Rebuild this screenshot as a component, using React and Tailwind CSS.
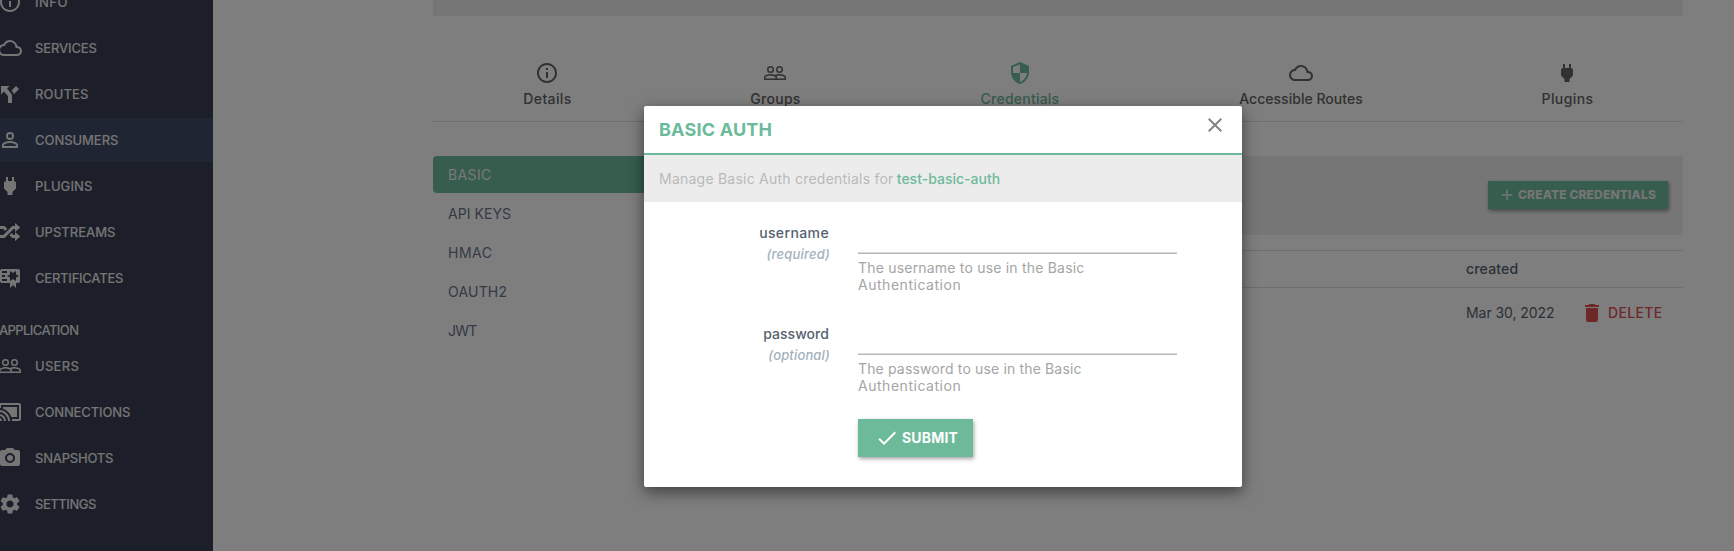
import React from "react";
import { MdInfoOutline, MdCloudQueue, MdSettings, MdDelete, MdClose, MdCheck, MdAdd } from "react-icons/md";

const PATHS = {
  fork: "M3,4V12.5L6,9.5L9,13C10,14 10,15 10,15V21H14V14C14,14 14,13 13.47,12C12.94,11 12,10 12,10L9,6.58L11.5,4M18,4L13.54,8.47L14,9C14,9 14.93,10 15.47,11C15.68,11.4 15.8,11.79 15.87,12.13L21,7",
  account: "M12,13C9.33,13 4,14.33 4,17V20H20V17C20,14.33 14.67,13 12,13M12,4A4,4 0 0,0 8,8A4,4 0 0,0 12,12A4,4 0 0,0 16,8A4,4 0 0,0 12,4M12,14.9C14.97,14.9 18.1,16.36 18.1,17V18.1H5.9V17C5.9,16.36 9,14.9 12,14.9M12,5.9A2.1,2.1 0 0,1 14.1,8A2.1,2.1 0 0,1 12,10.1A2.1,2.1 0 0,1 9.9,8A2.1,2.1 0 0,1 12,5.9Z",
  plug: "M16,7V3H14V7H10V3H8V7H8C7,7 6,8 6,9V14.5L9.5,18V21H14.5V18L18,14.5V9C18,8 17,7 16,7Z",
  shuffle: "M17,3L22.25,7.5L17,12L22.25,16.5L17,21V18H14.26L11.44,15.18L13.56,13.06L15.5,15H17V12L17,9H15.5L6.5,18H2V15H5.26L14.26,6H17V3M2,6H6.5L9.32,8.82L7.2,10.94L5.26,9H2V6Z",
  certificate: "M4,3C2.89,3 2,3.89 2,5V15A2,2 0 0,0 4,17H12V22L15,19L18,22V17H20A2,2 0 0,0 22,15V8L22,6V5A2,2 0 0,0 20,3H16V3H4M12,5L15,7L18,5V8.5L21,10L18,11.5V15L15,13L12,15V11.5L9,10L12,8.5V5M4,5H9V7H4V5M4,9H7V11H4V9M4,13H9V15H4V13Z",
  users: "M16.5,6.5A2,2 0 0,1 18.5,8.5A2,2 0 0,1 16.5,10.5A2,2 0 0,1 14.5,8.5A2,2 0 0,1 16.5,6.5M16.5,12A3.5,3.5 0 0,0 20,8.5A3.5,3.5 0 0,0 16.5,5A3.5,3.5 0 0,0 13,8.5A3.5,3.5 0 0,0 16.5,12M7.5,6.5A2,2 0 0,1 9.5,8.5A2,2 0 0,1 7.5,10.5A2,2 0 0,1 5.5,8.5A2,2 0 0,1 7.5,6.5M7.5,12A3.5,3.5 0 0,0 11,8.5A3.5,3.5 0 0,0 7.5,5A3.5,3.5 0 0,0 4,8.5A3.5,3.5 0 0,0 7.5,12M21.5,17.5H14V16.25C14,15.79 13.8,15.39 13.5,15.03C14.36,14.73 15.44,14.5 16.5,14.5C18.94,14.5 21.5,15.71 21.5,16.25M12.5,17.5H2.5V16.25C2.5,15.71 5.06,14.5 7.5,14.5C9.94,14.5 12.5,15.71 12.5,16.25M16.5,13C15.3,13 13.43,13.34 12,14C10.57,13.33 8.7,13 7.5,13C5.33,13 1,14.08 1,16.25V19H23V16.25C23,14.08 18.67,13 16.5,13Z",
  cast: "M21,3H3C1.89,3 1,3.89 1,5V8H3V5H21V19H14V21H21A2,2 0 0,0 23,19V5C23,3.89 22.1,3 21,3M1,10V12A9,9 0 0,1 10,21H12C12,14.92 7.07,10 1,10M19,7H5V8.63C8.96,9.91 12.09,13.04 13.37,17H19M1,14V16A5,5 0 0,1 6,21H8A7,7 0 0,0 1,14M1,18V21H4A3,3 0 0,0 1,18Z",
  camera: "M4,4H7L9,2H15L17,4H20A2,2 0 0,1 22,6V18A2,2 0 0,1 20,20H4A2,2 0 0,1 2,18V6A2,2 0 0,1 4,4M12,7A5,5 0 0,0 7,12A5,5 0 0,0 12,17A5,5 0 0,0 17,12A5,5 0 0,0 12,7M12,9A3,3 0 0,1 15,12A3,3 0 0,1 12,15A3,3 0 0,1 9,12A3,3 0 0,1 12,9Z",
  shield: "M12,12H19C18.47,16.11 15.72,19.78 12,20.92V12H5V6.3L12,3.19M12,1L3,5V11C3,16.55 6.84,21.73 12,23C17.16,21.73 21,16.55 21,11V5L12,1Z",
};

function Glyph({ name }) {
  return (
    <svg viewBox="0 0 24 24" className="size-6 shrink-0 fill-current">
      <path d={PATHS[name]} />
    </svg>
  );
}

function NavItem({ icon, label, tracking, active }) {
  return (
    <li className={`flex h-11 items-center ${active ? "bg-[#404a66]" : ""}`}>
      <span className="-ml-0.5 flex w-[37px] shrink-0">{icon}</span>
      <span className={`pt-px text-[13px] leading-none font-medium ${tracking}`}>{label}</span>
    </li>
  );
}

function Sidebar() {
  return (
    <nav className="h-full w-[213px] shrink-0 overflow-hidden bg-[#383f53] text-[#eaeaea]">
      <ul className="-mt-5 flex flex-col gap-0.5">
        <NavItem icon={<MdInfoOutline className="size-6" />} label="INFO" tracking="tracking-[0.45px]" />
        <NavItem icon={<MdCloudQueue className="size-6" />} label="SERVICES" tracking="tracking-[-0.15px]" />
        <NavItem icon={<Glyph name="fork" />} label="ROUTES" tracking="tracking-[0.13px]" />
        <NavItem icon={<Glyph name="account" />} label="CONSUMERS" tracking="tracking-[-0.06px]" active />
        <NavItem icon={<Glyph name="plug" />} label="PLUGINS" tracking="tracking-[0.1px]" />
        <NavItem icon={<Glyph name="shuffle" />} label="UPSTREAMS" tracking="tracking-[-0.02px]" />
        <NavItem icon={<Glyph name="certificate" />} label="CERTIFICATES" tracking="tracking-[-0.24px]" />
      </ul>
      <h2 className="-ml-px flex h-11 items-end pb-[7px] text-[13px] leading-none font-medium tracking-[-0.6px]">APPLICATION</h2>
      <ul className="flex flex-col gap-0.5">
        <NavItem icon={<Glyph name="users" />} label="USERS" tracking="tracking-[0.3px]" />
        <NavItem icon={<Glyph name="cast" />} label="CONNECTIONS" tracking="tracking-[-0.14px]" />
        <NavItem icon={<Glyph name="camera" />} label="SNAPSHOTS" tracking="tracking-[-0.24px]" />
        <NavItem icon={<MdSettings className="size-6" />} label="SETTINGS" tracking="tracking-[-0.47px]" />
      </ul>
    </nav>
  );
}

function Tab({ icon, label, className }) {
  return (
    <div className={`flex shrink-0 flex-col items-center gap-[7px] pt-[45px] text-sm leading-none font-medium ${className}`}>
      {icon}
      <span className="pl-px">{label}</span>
    </div>
  );
}

function TypeItem({ label, className }) {
  return <li className={`flex h-[37px] items-center rounded-sm pl-[15px] text-sm leading-none ${className}`}>{label}</li>;
}

function Page() {
  return (
    <main className="h-full grow overflow-hidden bg-[#fcfcfc] pr-[51px] pl-[220px]">
      <div className="h-4 bg-[#ededed]" />
      <div className="flex h-[106px] border-b border-[#dcdcdc] text-[#626262]">
        <Tab icon={<MdInfoOutline className="size-6" />} label="Details" className="w-[228px] tracking-[0.38px]" />
        <Tab icon={<Glyph name="users" />} label="Groups" className="w-[228px] tracking-[0.27px]" />
        <Tab icon={<Glyph name="shield" />} label="Credentials" className="w-[261px] tracking-[0.23px] text-[#6dba9b]" />
        <Tab icon={<MdCloudQueue className="size-6" />} label="Accessible Routes" className="w-[301px] tracking-[0.03px]" />
        <Tab icon={<Glyph name="plug" />} label="Plugins" className="w-[232px] tracking-[0.4px]" />
      </div>
      <div className="mt-[34px] flex gap-4">
        <ul className="flex w-[290px] shrink-0 flex-col gap-0.5 pt-px text-[#6a748c]">
          <TypeItem label="BASIC" className="-mt-px bg-[#6dba9b] pt-px tracking-[0.36px] text-[#f2f2f2]" />
          <TypeItem label="API KEYS" className="tracking-[0.05px]" />
          <TypeItem label="HMAC" className="tracking-[0.5px]" />
          <TypeItem label="OAUTH2" className="tracking-[0.2px]" />
          <TypeItem label="JWT" className="tracking-[-0.8px]" />
        </ul>
        <section className="grow text-sm leading-none text-[#55626d]">
          <div className="flex h-[79px] items-start justify-end bg-[#ededed] pt-[25px] pr-[15px]">
            <button className="flex h-7 w-[180px] items-center bg-[#6dba9b] pl-2.5 text-xs leading-none font-extrabold tracking-[0.15px] text-[#eaeaea] shadow-[1px_2px_4px_rgba(0,0,0,0.4)]">
              <MdAdd className="mr-[2px] size-[18px]" />
              CREATE CREDENTIALS
            </button>
          </div>
          <div className="mt-[15px] flex h-[38px] items-center border-y border-[#dcdcdc]">
            <span className="ml-auto w-[217px] font-medium tracking-[0.18px]">created</span>
          </div>
          <div className="flex h-[50px] items-center">
            <span className="ml-auto w-[114px] tracking-[-0.06px]">Mar 30, 2022</span>
            <span className="flex w-[103px] items-center gap-1 font-medium tracking-[0.35px] text-[#df5052]">
              <MdDelete className="size-6" />
              DELETE
            </span>
          </div>
        </section>
      </div>
    </main>
  );
}

function Field({ label, note, help, labelTracking, noteTracking, helpTracking }) {
  return (
    <div className="flex h-[101px]">
      <label className="flex w-[186px] shrink-0 flex-col items-end pt-[24px] text-sm leading-none font-medium text-[#55626d]">
        <span className={`pr-px ${labelTracking}`}>{label}</span>
        <em className={`mt-2 text-[13px] leading-none text-[#a3b1bd] ${noteTracking}`}>{note}</em>
      </label>
      <div className="ml-7 w-[319px] pt-[50px]">
        <div className="h-0.5 border-b border-[#b8b8b8] bg-[#dadada]" />
        <p className={`pt-[5px] text-sm leading-[17px] text-[#a5a5a5] ${helpTracking}`}>
          {help}
          <br />
          <span className="tracking-[0.53px]">Authentication</span>
        </p>
      </div>
    </div>
  );
}

function Modal() {
  return (
    <div className="h-[381px] w-[598px] rounded-[2px] bg-white shadow-[0_5px_15px_rgba(0,0,0,0.5)]">
      <header className="flex h-[49px] justify-between border-b-2 border-[#6dba9b]">
        <h1 className="flex h-[47px] items-center pl-[15px] text-lg leading-none font-bold tracking-[0.2px] text-[#6dba9b]">BASIC AUTH</h1>
        <MdClose className="mt-[7px] mr-[15px] size-6 text-[#858585]" />
      </header>
      <p className="flex h-[47px] items-center bg-[#ececec] pl-[15px] text-sm leading-none tracking-[0.23px] whitespace-pre text-[#b9b9b9]">
        Manage Basic Auth credentials for <span className="-ml-px font-medium tracking-[0.01px] text-[#6dba9b]">test-basic-auth</span>
      </p>
      <Field
        label="username"
        note="(required)"
        help="The username to use in the Basic"
        labelTracking="tracking-[0.38px]"
        noteTracking="tracking-[0.2px]"
        helpTracking="tracking-[0.2px]"
      />
      <Field
        label="password"
        note="(optional)"
        help="The password to use in the Basic"
        labelTracking="tracking-[0.05px]"
        noteTracking="tracking-[0.15px]"
        helpTracking="tracking-[0.15px]"
      />
      <button className="mt-[15px] ml-[214px] flex h-[38px] w-[115px] items-center bg-[#6dba9b] pl-[17px] text-sm leading-none font-bold tracking-[0.17px] text-white shadow-[1px_2px_4px_rgba(0,0,0,0.35)]">
        <MdCheck className="mr-[3px] size-6" />
        SUBMIT
      </button>
    </div>
  );
}

export default function App() {
  return (
    <div className="relative flex h-[551px] w-[1734px] overflow-hidden font-['Inter',sans-serif]">
      <Sidebar />
      <Page />
      <div className="absolute inset-0 flex items-start bg-black/50 pt-[106px] pl-[644px]">
        <Modal />
      </div>
    </div>
  );
}
